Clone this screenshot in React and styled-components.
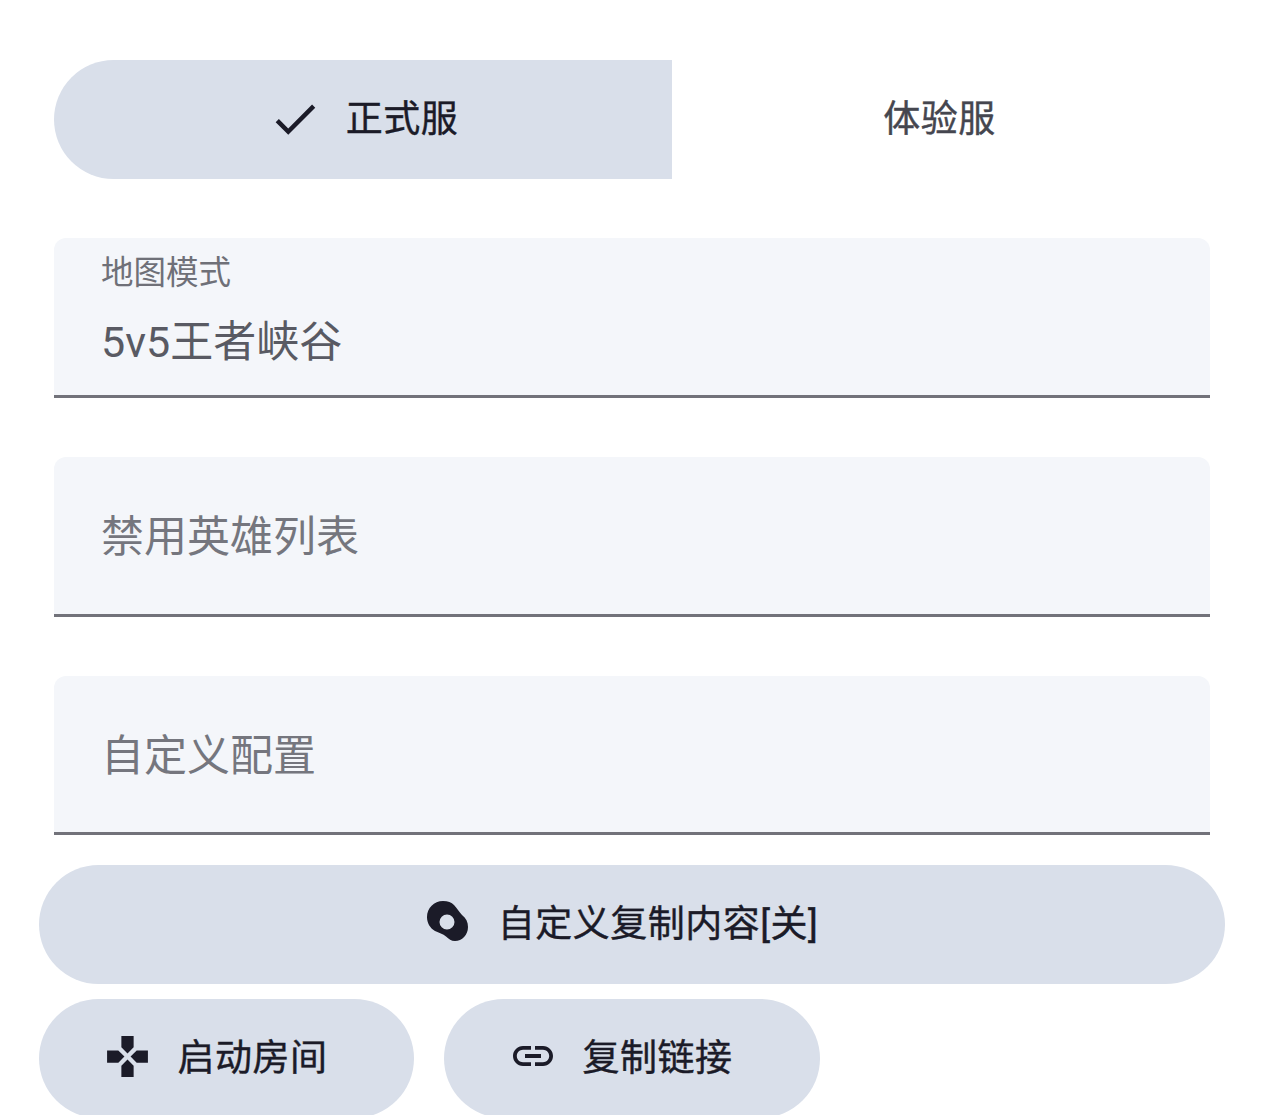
import styled, { createGlobalStyle } from "styled-components";

const GlobalStyle = createGlobalStyle`
  html, body {
    margin: 0;
    height: 100%;
    overflow: hidden;
    background: #fff;
  }
  body {
    font-family: Roboto, "Noto Sans CJK SC", sans-serif;
  }
`;

export default function App() {
  return (
    <>
      <GlobalStyle />
      <Page>
        <FormArea>
          <Segments>
            <Segment $selected>
              <IconBox $size={54} $lift={2}>
                <path d="M9 16.17L4.83 12l-1.42 1.41L9 19 21 7l-1.41-1.41z" />
              </IconBox>
              <ButtonText>正式服</ButtonText>
            </Segment>
            <Segment>
              <ButtonText>体验服</ButtonText>
            </Segment>
          </Segments>

          <Fields>
            <Field>
              <FieldLabel>地图模式</FieldLabel>
              <FieldValue>5v5王者峡谷</FieldValue>
            </Field>
            <Field>
              <Placeholder>禁用英雄列表</Placeholder>
            </Field>
            <Field>
              <Placeholder>自定义配置</Placeholder>
            </Field>
          </Fields>
        </FormArea>

        <Actions>
          <PillButton $wide>
            <EggIcon />
            <ButtonText>自定义复制内容[关]</ButtonText>
          </PillButton>
          <ButtonRow>
            <PillButton>
              <IconBox $size={49} $lift={5}>
                <path d="M15 7.5V2H9v5.5l3 3 3-3zM7.5 9H2v6h5.5l3-3-3-3zM9 16.5V22h6v-5.5l-3-3-3 3zM16.5 9l-3 3 3 3H22V9h-5.5z" />
              </IconBox>
              <ButtonText>启动房间</ButtonText>
            </PillButton>
            <PillButton>
              <IconBox $size={48} $lift={5}>
                <path d="M3.9 12c0-1.71 1.39-3.1 3.1-3.1h4V7H7c-2.76 0-5 2.24-5 5s2.24 5 5 5h4v-1.9H7c-1.71 0-3.1-1.39-3.1-3.1zM8 13h8v-2H8v2zm9-6h-4v1.9h4c1.71 0 3.1 1.39 3.1 3.1s-1.39 3.1-3.1 3.1h-4V17h4c2.76 0 5-2.24 5-5s-2.24-5-5-5z" />
              </IconBox>
              <ButtonText>复制链接</ButtonText>
            </PillButton>
          </ButtonRow>
        </Actions>
      </Page>
    </>
  );
}

function IconBox({ $size, $lift, children }) {
  return (
    <Icon $size={$size} $lift={$lift} viewBox="0 0 24 24" fill="currentColor">
      {children}
    </Icon>
  );
}

function EggIcon() {
  return (
    <Icon $size={42} $lift={5} viewBox="0 0 42 42" fill="currentColor">
      <path
        fillRule="evenodd"
        d="M16 0C21 0 24.5 1.5 27 4C30 7 32 11 35 14C39 17 41 21 41 26C41 34 35 40 28 40C24 40 22 38 19 35.5C16 33 12 32 8 30C3 27 0 22 0 16C0 7 7 0 16 0ZM20 13.5a7.5 7.5 0 1 0 0 15a7.5 7.5 0 1 0 0-15z"
      />
    </Icon>
  );
}

const Page = styled.div`
  padding: 60px 39px 0;
`;

const FormArea = styled.div`
  padding: 0 15px;
`;

const Segments = styled.div`
  display: grid;
  grid-template-columns: 618px 538px;
  height: 119px;
`;

const Segment = styled.div`
  display: flex;
  align-items: center;
  justify-content: center;
  gap: 24px;
  padding-right: ${({ $selected }) => ($selected ? "0" : "3px")};
  color: ${({ $selected }) => ($selected ? "#1b1b28" : "#45464f")};
  background: ${({ $selected }) => ($selected ? "#d9dfea" : "transparent")};
  border-radius: ${({ $selected }) => ($selected ? "60px 0 0 60px" : "0")};
`;

const ButtonText = styled.span`
  font-size: 37px;
  line-height: 50px;
  letter-spacing: 0.5px;
  -webkit-text-stroke: 0.4px currentColor;
`;

const Icon = styled.svg`
  flex: none;
  width: ${({ $size }) => $size}px;
  height: ${({ $size }) => $size}px;
  margin-top: ${({ $lift }) => -$lift}px;
`;

const Fields = styled.div`
  display: flex;
  flex-direction: column;
  gap: 59px;
  margin-top: 59px;
`;

const Field = styled.div`
  box-sizing: border-box;
  height: 160px;
  padding: 0 47px 0 48px;
  display: flex;
  flex-direction: column;
  justify-content: center;
  background: #f4f6fa;
  border-bottom: 3px solid #72727a;
  border-radius: 12px 12px 0 0;

  &:last-child {
    height: 159px;
  }
`;

const FieldLabel = styled.div`
  font-size: 32.5px;
  line-height: 44px;
  color: #6f7078;
  margin: -21px 0 0 -1px;
`;

const FieldValue = styled.div`
  font-size: 43px;
  line-height: 66px;
  color: #595a63;
  margin: 14px 0 -14px -1px;
`;

const Placeholder = styled.div`
  font-size: 43px;
  line-height: 66px;
  color: #75767e;
  margin: 1.5px 0 -1.5px -1px;
`;

const Actions = styled.div`
  display: flex;
  flex-direction: column;
  gap: 15px;
  margin-top: 30px;
`;

const ButtonRow = styled.div`
  display: grid;
  grid-template-columns: 375px 376px;
  gap: 30px;
`;

const PillButton = styled.div`
  box-sizing: border-box;
  height: 119px;
  padding-right: ${({ $wide }) => ($wide ? "19px" : "23px")};
  display: flex;
  align-items: center;
  justify-content: center;
  gap: ${({ $wide }) => ($wide ? "29px" : "26px")};
  color: #1b1b28;
  background: #d9dfea;
  border-radius: 60px;
`;
